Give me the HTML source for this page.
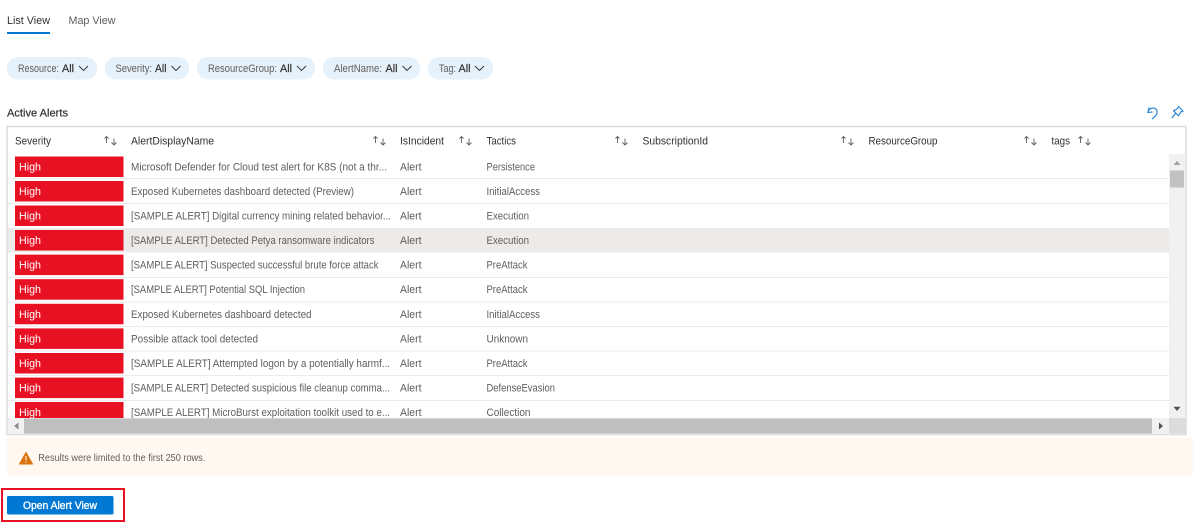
<!DOCTYPE html>
<html><head><meta charset="utf-8"><title>Active Alerts</title>
<style>
html,body{margin:0;padding:0;background:#fff;width:1200px;height:531px;overflow:hidden}
svg{display:block;filter:blur(.3px)}
text{font-family:"Liberation Sans",sans-serif;font-size:11px;fill:#605e5c}
.h{fill:#323130;font-size:11px}
.w{fill:#fff}
.d{fill:#323130}
.b{fill:#323130;stroke:#323130;stroke-width:.2}
.sep{fill:#edebe9}
.red{fill:#e81123}
.sort{fill:none;stroke:#605e5c;stroke-width:.9}
.chev{fill:none;stroke:#323130;stroke-width:.9}
.ic{fill:none;stroke:#2b88d8;stroke-width:1.2}
</style></head><body>
<svg width="1200" height="531" viewBox="0 0 1200 531" xmlns="http://www.w3.org/2000/svg">
<defs>
<g id="s"><path class="sort" d="M2.500 7.500V1M.5 3L2.500 1L4.500 3"/><path class="sort" d="M10 3V9.500M7.500 7L10 9.500L12.500 7"/></g>
<path id="c" class="chev" d="M0 0L4.500 4.500L9 0"/>
<g id="row"><rect class="red" x="15" y="0" width="108.500" height="20.500"/><text class="w" x="19" y="14" textLength="22" lengthAdjust="spacingAndGlyphs">High</text><text x="400" y="14" textLength="21.500" lengthAdjust="spacingAndGlyphs">Alert</text></g>
<clipPath id="cp"><rect x="7" y="154" width="1162" height="264"/></clipPath>
</defs>

<!-- tabs -->
<text class="d" x="7" y="24" textLength="43" lengthAdjust="spacingAndGlyphs">List View</text>
<text x="68.500" y="24" textLength="47" lengthAdjust="spacingAndGlyphs">Map View</text>
<rect x="7" y="32" width="43" height="2" fill="#0078d4"/>

<!-- chips -->
<g fill="#e5f1fb">
<rect x="7" y="57" width="90" height="22.500" rx="11"/>
<rect x="105" y="57" width="84" height="22.500" rx="11"/>
<rect x="197" y="57" width="118" height="22.500" rx="11"/>
<rect x="323" y="57" width="97" height="22.500" rx="11"/>
<rect x="428" y="57" width="65" height="22.500" rx="11"/>
</g>
<text x="18" y="72" textLength="41" lengthAdjust="spacingAndGlyphs">Resource:</text><text class="b" x="62" y="72" textLength="12" lengthAdjust="spacingAndGlyphs">All</text><use href="#c" x="79" y="66"/>
<text x="115.500" y="72" textLength="36.500" lengthAdjust="spacingAndGlyphs">Severity:</text><text class="b" x="155" y="72" textLength="11.500" lengthAdjust="spacingAndGlyphs">All</text><use href="#c" x="171.500" y="66"/>
<text x="208" y="72" textLength="69" lengthAdjust="spacingAndGlyphs">ResourceGroup:</text><text class="b" x="280" y="72" textLength="12" lengthAdjust="spacingAndGlyphs">All</text><use href="#c" x="297" y="66"/>
<text x="334" y="72" textLength="48" lengthAdjust="spacingAndGlyphs">AlertName:</text><text class="b" x="385.500" y="72" textLength="12" lengthAdjust="spacingAndGlyphs">All</text><use href="#c" x="402.500" y="66"/>
<text x="439" y="72" textLength="17" lengthAdjust="spacingAndGlyphs">Tag:</text><text class="b" x="458.500" y="72" textLength="12" lengthAdjust="spacingAndGlyphs">All</text><use href="#c" x="475" y="66"/>

<!-- title -->
<text class="b" x="7" y="116.500" textLength="61" lengthAdjust="spacingAndGlyphs">Active Alerts</text>
<path class="ic" d="M1149 107.500L1147.800 112.500L1152.500 112M1148.500 110.500C1150.500 107.500 1156 107 1157 111C1157.800 114 1155.500 116.500 1152 119"/>
<path class="ic" d="M1178.500 106.500L1183 111L1180.800 112L1178.500 115.800L1173.500 110.800L1177.300 108.800ZM1175.800 113L1172 118"/>

<!-- table frame -->
<rect x="7" y="126.500" width="1179" height="308" fill="#fff" stroke="#dedcda" stroke-width="1.500"/>

<!-- header -->
<g>
<text class="h" x="15" y="144.500" textLength="36" lengthAdjust="spacingAndGlyphs">Severity</text><use href="#s" x="104" y="135.500"/>
<text class="h" x="131" y="144.500" textLength="83" lengthAdjust="spacingAndGlyphs">AlertDisplayName</text><use href="#s" x="373" y="135.500"/>
<text class="h" x="400" y="144.500" textLength="44" lengthAdjust="spacingAndGlyphs">IsIncident</text><use href="#s" x="459" y="135.500"/>
<text class="h" x="486.500" y="144.500" textLength="29.500" lengthAdjust="spacingAndGlyphs">Tactics</text><use href="#s" x="615" y="135.500"/>
<text class="h" x="642.500" y="144.500" textLength="65.500" lengthAdjust="spacingAndGlyphs">SubscriptionId</text><use href="#s" x="841" y="135.500"/>
<text class="h" x="868.500" y="144.500" textLength="69" lengthAdjust="spacingAndGlyphs">ResourceGroup</text><use href="#s" x="1024" y="135.500"/>
<text class="h" x="1051.500" y="144.500" textLength="18.500" lengthAdjust="spacingAndGlyphs">tags</text><use href="#s" x="1078" y="135.500"/>
</g>

<!-- rows -->
<g clip-path="url(#cp)">
<rect x="8" y="228" width="1161" height="24.500" fill="#edebe9"/>
<rect class="sep" x="8" y="178" width="1161" height="1"/>
<rect class="sep" x="8" y="203" width="1161" height="1"/>
<rect class="sep" x="8" y="277" width="1161" height="1"/>
<rect class="sep" x="8" y="301.500" width="1161" height="1"/>
<rect class="sep" x="8" y="326" width="1161" height="1"/>
<rect class="sep" x="8" y="350.500" width="1161" height="1"/>
<rect class="sep" x="8" y="375" width="1161" height="1"/>
<rect class="sep" x="8" y="400" width="1161" height="1"/>

<use href="#row" y="156.500"/>
<use href="#row" y="181"/>
<use href="#row" y="205.500"/>
<use href="#row" y="230"/>
<use href="#row" y="254.600"/>
<use href="#row" y="279.200"/>
<use href="#row" y="303.800"/>
<use href="#row" y="328.400"/>
<use href="#row" y="353"/>
<use href="#row" y="377.600"/>
<use href="#row" y="402"/>

<text x="131" y="170.500" textLength="256" lengthAdjust="spacingAndGlyphs">Microsoft Defender for Cloud test alert for K8S (not a thr...</text>
<text x="131" y="195" textLength="223" lengthAdjust="spacingAndGlyphs">Exposed Kubernetes dashboard detected (Preview)</text>
<text x="131" y="219.500" textLength="260" lengthAdjust="spacingAndGlyphs">[SAMPLE ALERT] Digital currency mining related behavior...</text>
<text x="131" y="244" textLength="243.500" lengthAdjust="spacingAndGlyphs">[SAMPLE ALERT] Detected Petya ransomware indicators</text>
<text x="131" y="268.600" textLength="247.500" lengthAdjust="spacingAndGlyphs">[SAMPLE ALERT] Suspected successful brute force attack</text>
<text x="131" y="293.200" textLength="174" lengthAdjust="spacingAndGlyphs">[SAMPLE ALERT] Potential SQL Injection</text>
<text x="131" y="317.800" textLength="180.500" lengthAdjust="spacingAndGlyphs">Exposed Kubernetes dashboard detected</text>
<text x="131" y="342.400" textLength="127" lengthAdjust="spacingAndGlyphs">Possible attack tool detected</text>
<text x="131" y="367" textLength="259" lengthAdjust="spacingAndGlyphs">[SAMPLE ALERT] Attempted logon by a potentially harmf...</text>
<text x="131" y="391.600" textLength="259" lengthAdjust="spacingAndGlyphs">[SAMPLE ALERT] Detected suspicious file cleanup comma...</text>
<text x="131" y="416" textLength="259" lengthAdjust="spacingAndGlyphs">[SAMPLE ALERT] MicroBurst exploitation toolkit used to e...</text>

<text x="486.500" y="170.500" textLength="48.500" lengthAdjust="spacingAndGlyphs">Persistence</text>
<text x="486.500" y="195" textLength="53.500" lengthAdjust="spacingAndGlyphs">InitialAccess</text>
<text x="486.500" y="219.500" textLength="42.500" lengthAdjust="spacingAndGlyphs">Execution</text>
<text x="486.500" y="244" textLength="42.500" lengthAdjust="spacingAndGlyphs">Execution</text>
<text x="486.500" y="268.600" textLength="41" lengthAdjust="spacingAndGlyphs">PreAttack</text>
<text x="486.500" y="293.200" textLength="41" lengthAdjust="spacingAndGlyphs">PreAttack</text>
<text x="486.500" y="317.800" textLength="53.500" lengthAdjust="spacingAndGlyphs">InitialAccess</text>
<text x="486.500" y="342.400" textLength="41.500" lengthAdjust="spacingAndGlyphs">Unknown</text>
<text x="486.500" y="367" textLength="41" lengthAdjust="spacingAndGlyphs">PreAttack</text>
<text x="486.500" y="391.600" textLength="68.500" lengthAdjust="spacingAndGlyphs">DefenseEvasion</text>
<text x="486.500" y="416" textLength="44" lengthAdjust="spacingAndGlyphs">Collection</text>
</g>

<!-- vertical scrollbar -->
<rect x="1169" y="154" width="16.500" height="264" fill="#f1f1f1"/>
<rect x="1170" y="170.500" width="14" height="17" fill="#c1c1c1"/>
<path d="M1173.500 165L1177 160.800L1180.500 165Z" fill="#a3a3a3"/>
<path d="M1173.500 406.800L1177 411L1180.500 406.800Z" fill="#505050"/>

<!-- horizontal scrollbar -->
<rect x="7.500" y="418" width="1162" height="15.500" fill="#f1f1f1"/>
<rect x="24" y="418.500" width="1128" height="15" fill="#bfbfbf"/>
<path d="M18.500 422.500L14 426L18.500 429.500Z" fill="#8a8a8a"/>
<path d="M1159 422.500L1163 426L1159 429.500Z" fill="#505050"/>
<rect x="1169" y="418" width="16.500" height="15.500" fill="#dcdcdc"/>

<!-- notice -->
<rect x="7" y="438" width="1186" height="38.500" fill="#fff7f0"/>
<path d="M26 452.500L32.500 464H19.500Z" fill="#d9730d" stroke="#d9730d" stroke-linejoin="round"/>
<rect x="25.500" y="456" width="1" height="4.500" fill="#fff"/>
<rect x="25.500" y="461.500" width="1" height="1.200" fill="#fff"/>
<text x="38.300" y="461" textLength="167" lengthAdjust="spacingAndGlyphs" style="font-size:10px">Results were limited to the first 250 rows.</text>

<!-- button -->
<rect x="2" y="489" width="122" height="32" fill="none" stroke="#e81123" stroke-width="2"/>
<rect x="7" y="496" width="106.500" height="18.500" rx="1.500" fill="#0078d4"/>
<text class="w" x="23" y="509" textLength="74" lengthAdjust="spacingAndGlyphs" style="stroke:#fff;stroke-width:.35">Open Alert View</text>
</svg>
</body></html>
